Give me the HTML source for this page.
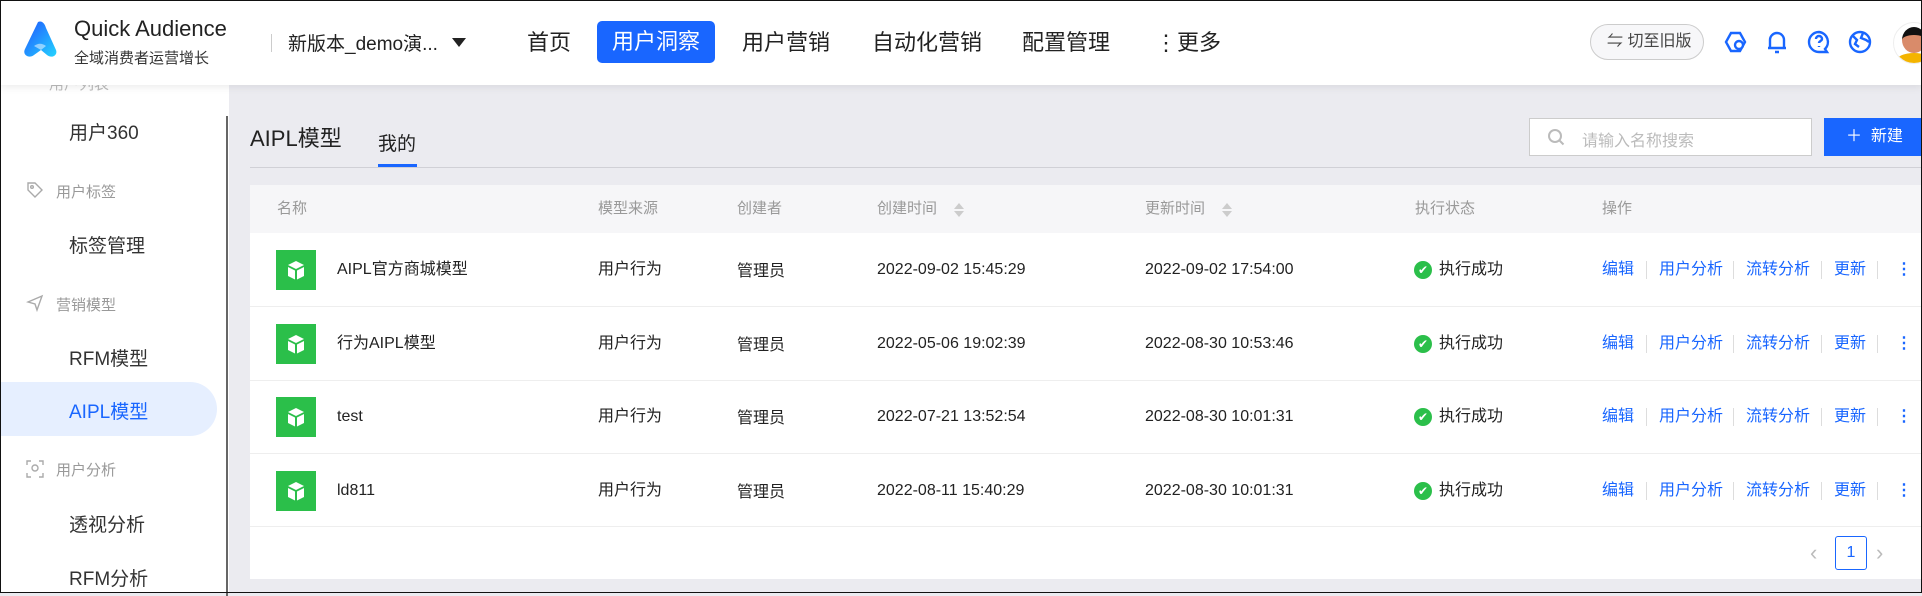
<!DOCTYPE html>
<html><head><meta charset="utf-8"><style>
*{box-sizing:border-box;margin:0;padding:0}
body{width:1922px;height:593px;overflow:hidden;background:#ebebf0;font-family:"Liberation Sans","Noto Sans CJK SC",sans-serif;position:relative;color:#333}
.a{position:absolute;white-space:nowrap}
#hdr{position:absolute;left:0;top:0;width:1922px;height:85px;background:#fff;box-shadow:0 2px 8px rgba(0,0,0,.08);z-index:5}
#side{position:absolute;left:0;top:85px;width:229px;height:508px;background:#fff}
.nav{font-size:22px;color:#222;top:25px}
.si{font-size:19px;color:#333}
.sg{font-size:15px;color:#999}
.th{font-size:15px;color:#999;top:199px;line-height:20px}
.td{font-size:16px;color:#222;line-height:20px}
.lk{font-size:16px;color:#1966ff;line-height:20px}
.dv{position:absolute;width:1px;height:18px;background:#ddd}
.sort{position:absolute;top:4px;width:0;height:0;border-left:5px solid transparent;border-right:5px solid transparent}
</style></head><body>
<div id="hdr">
 <svg class="a" style="left:22px;top:20px" width="36" height="38" viewBox="0 0 36 38"><defs><linearGradient id="g" x1="0" y1="0" x2="1" y2="1"><stop offset="0" stop-color="#1f55ff"/><stop offset="1" stop-color="#25d4ff"/></linearGradient></defs><path d="M16 2c4-2 7 2 8 6l10 22c2 5-4 9-9 5l-6-5-7 5c-5 4-12 0-9-6z" fill="url(#g)"/><path d="M12 26c4-3 8-3 12 0l-5 4z" fill="#fff" opacity=".5"/></svg>
 <div class="a" style="left:74px;top:16px;font-size:22px;color:#222">Quick Audience</div>
 <div class="a" style="left:74px;top:47px;font-size:15px;color:#333">全域消费者运营增长</div>
 <div class="a" style="left:271px;top:34px;width:1px;height:18px;background:#ccc"></div>
 <div class="a" style="left:288px;top:29px;font-size:19px;color:#222">新版本_demo演...</div>
 <div class="a" style="left:452px;top:38px;width:0;height:0;border-left:7px solid transparent;border-right:7px solid transparent;border-top:9px solid #222"></div>
 <div class="a nav" style="left:527px">首页</div>
 <div class="a" style="left:597px;top:21px;width:118px;height:42px;background:#1966ff;border-radius:5px;color:#fff;font-size:22px;text-align:center;line-height:42px">用户洞察</div>
 <div class="a nav" style="left:742px">用户营销</div>
 <div class="a nav" style="left:872px">自动化营销</div>
 <div class="a nav" style="left:1022px">配置管理</div>
 <div class="a nav" style="left:1155px">⋮更多</div>
 <div class="a" style="left:1590px;top:24px;width:114px;height:36px;border:1px solid #ccc;border-radius:18px;background:#f7f7f9;font-size:16px;color:#444;line-height:34px;padding-left:16px">⇋ 切至旧版</div>
 <svg class="a" style="left:1724px;top:30px" width="24" height="24" viewBox="0 0 24 24" fill="none" stroke="#1966ff" stroke-width="2.4"><path d="M7 3h9l5 9-5 9H7l-5-9z"/><circle cx="15" cy="15" r="4" fill="#fff"/></svg>
 <svg class="a" style="left:1766px;top:30px" width="22" height="24" viewBox="0 0 22 24" fill="none" stroke="#1966ff" stroke-width="2.4"><path d="M4 18V10a7 7 0 0114 0v8zM2 18h18M9 22h4"/></svg>
 <svg class="a" style="left:1807px;top:30px" width="24" height="24" viewBox="0 0 24 24" fill="none" stroke="#1966ff" stroke-width="2.4"><path d="M12 2a10 10 0 100 20h8l-2-3a10 10 0 00-6-17z"/><path d="M9 9a3 3 0 116 0c0 2-3 2-3 4M12 16v1"/></svg>
 <svg class="a" style="left:1848px;top:30px" width="24" height="24" viewBox="0 0 24 24" fill="none" stroke="#1966ff" stroke-width="2.4"><circle cx="12" cy="12" r="10"/><path d="M5 6l4 4-2 4 4 3M15 3l-2 5 5 2 3 2"/></svg>
 <div class="a" style="left:1893px;top:22px;width:42px;height:42px;border-radius:50%;background:#fff;border:1px solid #eee;overflow:hidden"><div class="a" style="left:8px;top:4px;width:24px;height:26px;border-radius:50%;background:#d98b6a;border-top:8px solid #111"></div><div class="a" style="left:2px;top:30px;width:36px;height:16px;border-radius:50%;background:#f4b400"></div></div>
</div>
<div id="side">
 <div class="a sg" style="left:49px;top:-12px;color:#bbb">用户列表</div>
 <div class="a si" style="left:69px;top:33px">用户360</div>
 <svg class="a" style="left:26px;top:96px" width="18" height="18" viewBox="0 0 18 18" fill="none" stroke="#aaa" stroke-width="1.4"><path d="M2 2h7l7 7-7 7-7-7z"/><circle cx="6" cy="6" r="1.3"/></svg>
 <div class="a sg" style="left:56px;top:96px">用户标签</div>
 <div class="a si" style="left:69px;top:146px">标签管理</div>
 <svg class="a" style="left:26px;top:209px" width="18" height="18" viewBox="0 0 18 18" fill="none" stroke="#aaa" stroke-width="1.4"><path d="M2 8l14-6-5 14-2-6z"/></svg>
 <div class="a sg" style="left:56px;top:209px">营销模型</div>
 <div class="a si" style="left:69px;top:259px">RFM模型</div>
 <div class="a" style="left:0;top:297px;width:217px;height:54px;background:#e6efff;border-radius:0 27px 27px 0"></div>
 <div class="a si" style="left:69px;top:312px;color:#1966ff">AIPL模型</div>
 <svg class="a" style="left:26px;top:375px" width="18" height="18" viewBox="0 0 18 18" fill="none" stroke="#aaa" stroke-width="1.4"><path d="M1 5V1h4M13 1h4v4M17 13v4h-4M5 17H1v-4"/><circle cx="9" cy="8" r="3"/></svg>
 <div class="a sg" style="left:56px;top:374px">用户分析</div>
 <div class="a si" style="left:69px;top:425px">透视分析</div>
 <div class="a si" style="left:69px;top:479px">RFM分析</div>
 <div class="a" style="left:226px;top:31px;width:2px;height:480px;background:#666"></div>
</div>
<div class="a" style="left:250px;top:121px;font-size:22px;color:#222">AIPL模型</div>
<div class="a" style="left:378px;top:129px;font-size:19px;color:#222">我的</div>
<div class="a" style="left:378px;top:164px;width:39px;height:3px;background:#1966ff"></div>
<div class="a" style="left:250px;top:167px;width:1672px;height:1px;background:#d0d0d6"></div>
<div class="a" style="left:1529px;top:118px;width:283px;height:38px;background:#fff;border:1px solid #ccc"></div>
<svg class="a" style="left:1547px;top:128px" width="18" height="18" viewBox="0 0 18 18" fill="none" stroke="#bbb" stroke-width="2"><circle cx="8" cy="8" r="6"/><path d="M12.5 12.5l4 4"/></svg>
<div class="a" style="left:1582px;top:127px;font-size:16px;color:#bbb">请输入名称搜索</div>
<div class="a" style="left:1824px;top:118px;width:98px;height:38px;background:#1966ff;color:#fff;font-size:16px;line-height:38px;padding-left:22px">＋&nbsp;&nbsp;新建</div>
<div class="a" style="left:250px;top:185px;width:1672px;height:394px;background:#fff"></div>
<div class="a" style="left:250px;top:185px;width:1672px;height:48px;background:#f6f6f8"></div>
<div class="a th" style="left:277px">名称</div>
<div class="a th" style="left:598px">模型来源</div>
<div class="a th" style="left:737px">创建者</div>
<div class="a th" style="left:877px">创建时间</div>
<div class="a" style="left:954px;top:199px;width:10px;height:20px"><div class="sort" style="border-bottom:6px solid #ccc"></div><div class="sort" style="top:12px;border-top:6px solid #ccc"></div></div>
<div class="a th" style="left:1145px">更新时间</div>
<div class="a" style="left:1222px;top:199px;width:10px;height:20px"><div class="sort" style="border-bottom:6px solid #ccc"></div><div class="sort" style="top:12px;border-top:6px solid #ccc"></div></div>
<div class="a th" style="left:1415px">执行状态</div>
<div class="a th" style="left:1602px">操作</div>
<div id="rows"></div>
<div class="a" style="left:250px;top:526px;width:1672px;height:1px;background:#eee"></div>
<div class="a" style="left:1810px;top:540px;font-size:22px;color:#bbb">‹</div>
<div class="a" style="left:1835px;top:536px;width:32px;height:34px;border:1px solid #1966ff;border-radius:3px;text-align:center;line-height:32px;font-size:16px;color:#1966ff">1</div>
<div class="a" style="left:1876px;top:540px;font-size:22px;color:#bbb">›</div>
<div class="a" style="left:0;top:0;width:1922px;height:593px;border:1px solid #111;z-index:9;pointer-events:none"></div>
<script>
var d=[["AIPL官方商城模型","2022-09-02 15:45:29","2022-09-02 17:54:00"],["行为AIPL模型","2022-05-06 19:02:39","2022-08-30 10:53:46"],["test","2022-07-21 13:52:54","2022-08-30 10:01:31"],["ld811","2022-08-11 15:40:29","2022-08-30 10:01:31"]];
var h="";d.forEach(function(r,i){var c=270+i*73.5;var t=c-10;
h+='<div class="a" style="left:276px;top:'+(c-20)+'px;width:40px;height:40px;background:#2bbf4a"><svg width="40" height="40" viewBox="0 0 40 40"><path d="M12 15l8-4 8 4-8 4z" fill="#fff"/><path d="M12 17l7 3.5v9L12 26z M28 17l-7 3.5v9l7-3.5z" fill="#fff"/></svg></div>';
h+='<div class="a td" style="left:337px;top:'+t+'px">'+r[0]+'</div><div class="a td" style="left:598px;top:'+t+'px">用户行为</div><div class="a td" style="left:737px;top:'+(t+2)+'px">管理员</div><div class="a td" style="left:877px;top:'+t+'px">'+r[1]+'</div><div class="a td" style="left:1145px;top:'+t+'px">'+r[2]+'</div>';
h+='<div class="a" style="left:1414px;top:'+(c-9)+'px;width:18px;height:18px;border-radius:50%;background:#2bbf4a;color:#fff;font-size:12px;text-align:center;line-height:18px">✔</div><div class="a td" style="left:1439px;top:'+t+'px">执行成功</div>';
h+='<div class="a lk" style="left:1602px;top:'+t+'px">编辑</div><div class="dv" style="left:1646px;top:'+(c-9)+'px"></div><div class="a lk" style="left:1659px;top:'+t+'px">用户分析</div><div class="dv" style="left:1733px;top:'+(c-9)+'px"></div><div class="a lk" style="left:1746px;top:'+t+'px">流转分析</div><div class="dv" style="left:1821px;top:'+(c-9)+'px"></div><div class="a lk" style="left:1834px;top:'+t+'px">更新</div><div class="dv" style="left:1877px;top:'+(c-9)+'px"></div><div class="a lk" style="left:1896px;top:'+t+'px;font-weight:bold">⋮</div>';
if(i<3)h+='<div class="a" style="left:250px;top:'+(c+36)+'px;width:1672px;height:1px;background:#eee"></div>';});
document.getElementById("rows").innerHTML=h;
</script>
</body></html>
